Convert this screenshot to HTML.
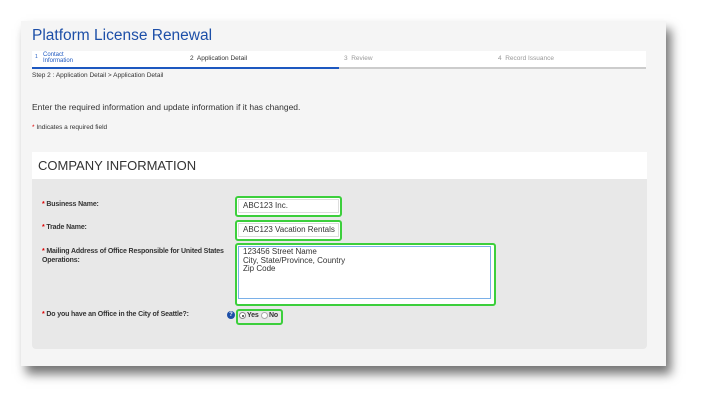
<!DOCTYPE html>
<html><head><style>
body{margin:0;width:708px;height:408px;background:#fff;font-family:"Liberation Sans",Arial,sans-serif;position:relative;overflow:hidden}
.a{position:absolute}
#panel{left:21px;top:21px;width:645px;height:345px;background:#f5f5f5;box-shadow:5px 8px 10px rgba(0,0,0,.55)}
.t{font-size:8px;color:#333;white-space:nowrap}
.lab{font-size:7px;letter-spacing:-0.15px;font-weight:bold;color:#333;white-space:nowrap}
.lab b{color:#d00}
.grn{border:2px solid #3ccf3c;border-radius:3px;background:#fff}
.inp{font-size:8px;color:#333;background:#fff;border:1px solid #bbb}
</style></head><body>
<div id="panel" class="a"></div>
<div class="a" style="left:32px;top:27px;font-size:15.5px;color:#1d4fa8">Platform License Renewal</div>
<div class="a" style="left:32px;top:51px;width:614px;height:17px;background:#fff"></div>
<div class="a" style="left:32px;top:67px;width:614px;height:2px;background:#ccc"></div>
<div class="a" style="left:32px;top:67px;width:307px;height:2px;background:#1d58c0"></div>
<div class="a" style="left:35px;top:54px;font-size:5px;color:#1d58c0">1</div>
<div class="a" style="left:43px;top:52px;font-size:6px;line-height:6px;color:#1d58c0">Contact<br>Information</div>
<div class="a t" style="left:190px;top:55px;font-size:6.5px">2&nbsp; Application Detail</div>
<div class="a t" style="left:344px;top:55px;font-size:6.5px;color:#999">3&nbsp; Review</div>
<div class="a t" style="left:498px;top:55px;font-size:6.5px;color:#999">4&nbsp; Record Issuance</div>
<div class="a t" style="left:32px;top:72px;font-size:6.5px">Step 2 : Application Detail &gt; Application Detail</div>
<div class="a t" style="left:32px;top:102px;font-size:8.5px">Enter the required information and update information if it has changed.</div>
<div class="a t" style="left:32px;top:124px;font-size:6.5px"><span style="color:#d00">*</span> Indicates a required field</div>
<div class="a" style="left:32px;top:152px;width:615px;height:197px;background:#e8e8e8;border-radius:0 0 4px 4px"></div>
<div class="a" style="left:32px;top:152px;width:615px;height:27px;background:#fff"></div>
<div class="a" style="left:38px;top:158px;font-size:13px;color:#333">COMPANY INFORMATION</div>
<div class="a lab" style="left:42px;top:201px"><b>*</b> Business Name:</div>
<div class="a lab" style="left:42px;top:224px"><b>*</b> Trade Name:</div>
<div class="a lab" style="left:42px;top:247px;line-height:9px"><b>*</b> Mailing Address of Office Responsible for United States<br>Operations:</div>
<div class="a lab" style="left:42px;top:311px"><b>*</b> Do you have an Office in the City of Seattle?:</div>
<div class="a grn" style="left:235px;top:196px;width:103px;height:17px"></div>
<div class="a inp" style="left:238px;top:199px;width:95px;height:11px;padding:1px 0 0 4px;border-color:#ddd">ABC123 Inc.</div>
<div class="a grn" style="left:235px;top:220px;width:103px;height:17px"></div>
<div class="a inp" style="left:238px;top:223px;width:95px;height:11px;padding:1px 0 0 4px;border-color:#ddd">ABC123 Vacation Rentals</div>
<div class="a grn" style="left:235px;top:243px;width:257px;height:59px"></div>
<div class="a inp" style="left:238px;top:246px;width:247px;height:50px;padding:1px 0 0 4px;border-color:#7ab0e8;line-height:8.5px">123456 Street Name<br>City, State/Province, Country<br>Zip Code</div>
<div class="a" style="left:227px;top:311px;width:8px;height:8px;border-radius:50%;background:#1d4fa8;color:#fff;font-size:6px;font-weight:bold;text-align:center;line-height:8px">?</div>
<div class="a grn" style="left:236px;top:309px;width:43px;height:12px;background:#e8e8e8"></div>
<div class="a" style="left:239px;top:312px;width:5px;height:5px;border:1px solid #888;border-radius:50%;background:#fff"><div style="margin:1.5px;width:2px;height:2px;border-radius:50%;background:#333"></div></div>
<div class="a lab" style="left:247px;top:312px">Yes</div>
<div class="a" style="left:261px;top:312px;width:5px;height:5px;border:1px solid #aaa;border-radius:50%;background:#fff"></div>
<div class="a lab" style="left:269px;top:312px">No</div>
</body></html>
